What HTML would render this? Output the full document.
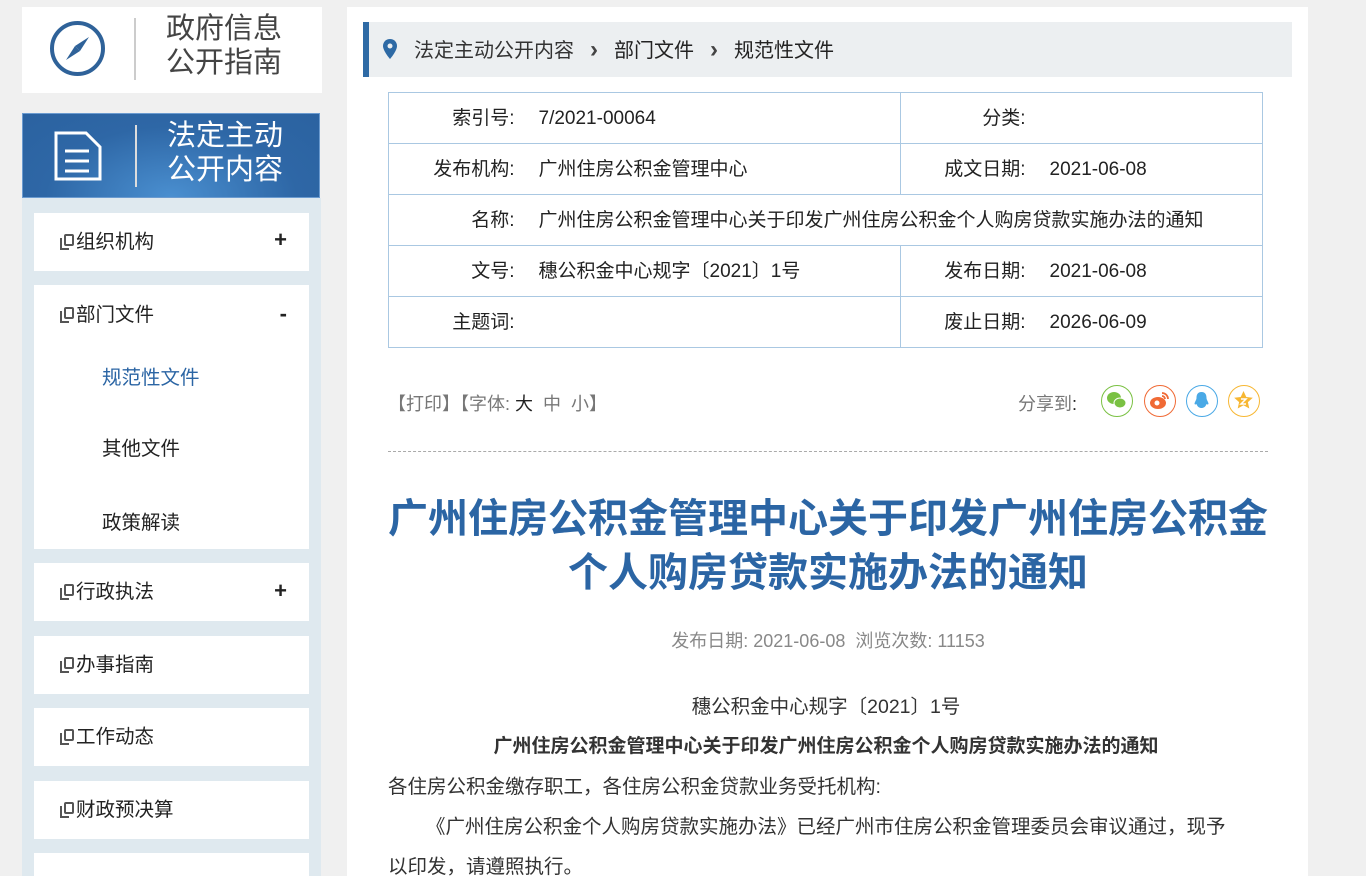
<!DOCTYPE html>
<html><head><meta charset="utf-8"><style>
*{margin:0;padding:0;box-sizing:border-box}
html,body{width:1366px;height:876px;overflow:hidden}
body{background:#f0f0f0;font-family:"Liberation Sans","Noto Sans CJK SC",sans-serif;position:relative;color:#333}
.abs{position:absolute}
.top{left:22px;top:7px;width:300px;height:86px;background:#fff}
.blue{left:22px;top:113px;width:298px;height:85px;background:radial-gradient(ellipse at 50% 100%,#4a8fd0 0%,#2e67a6 60%,#2b62a0 100%);border:1px solid #6b9bd0}
.vsep{position:absolute;left:112px;top:18px;width:2px;height:62px}
.bt{position:absolute;left:144px;font-size:29px;line-height:34px;}
.side{left:22px;top:198px;width:299px;height:700px;background:#dfe9ef}
.item{position:absolute;left:12px;width:275px;background:#fff;font-size:19.5px;color:#222}
.item .l{position:absolute;left:26px;line-height:28px}
.item .p{position:absolute;right:22px;font-size:22px;font-weight:bold}
.ic{display:inline-block;width:10px;height:12px;border:2px solid #555;border-radius:2px;position:relative;margin-right:6px;vertical-align:2px;left:4px}
.ic:before{content:"";position:absolute;left:-6px;top:2px;width:7px;height:10px;border-left:2px solid #555;border-bottom:2px solid #555}
.main{left:347px;top:7px;width:961px;height:880px;background:#fff}
.bc{left:363px;top:22px;width:929px;height:55px;background:#eceff1;border-left:6px solid #2e6aa5;font-size:20px;line-height:55px;color:#333}
.chev{display:inline-block;margin:0 16px;font-size:24px;font-weight:bold;color:#444}
table{position:absolute;left:388px;top:92px;width:875px;border-collapse:collapse;font-size:19px;color:#222}
td{border-top:1px solid #aac8e2;border-bottom:1px solid #aac8e2;height:51px;padding:2px 0 0;line-height:26px;vertical-align:middle}
td span{display:inline-block;line-height:26px;height:26px}
td.k{text-align:right;padding-right:24px}
td.first{border-left:1px solid #aac8e2}
td.last{border-right:1px solid #aac8e2}
td.mid{border-right:1px solid #aac8e2}
.sh{width:32px;height:32px;border-radius:50%;border:1.5px solid;top:385px;background:#fff}
p{position:absolute;font-size:19.5px;color:#333}
</style></head><body>
<div class="abs top">
 <svg class="abs" style="left:27px;top:13px" width="57" height="57" viewBox="0 0 57 57"><circle cx="28.5" cy="28.5" r="25.5" fill="none" stroke="#2f6299" stroke-width="4"/><path d="M40 17 L31 31 L26 26 Z" fill="#2f6299"/><path d="M17 40 L26 26 L31 31 Z" fill="#2f6299"/></svg>
 <div class="vsep" style="background:#ccc;top:11px"></div>
 <div class="bt" style="top:5px;color:#444">政府信息<br>公开指南</div>
</div>
<div class="abs blue">
 <svg class="abs" style="left:30px;top:16px" width="52" height="52" viewBox="0 0 52 52"><path d="M3 3 H33 L47 17 V49 H3 Z" fill="none" stroke="#fff" stroke-width="3"/><path d="M12 21H36M12 31H36M12 41H36" stroke="#fff" stroke-width="3"/></svg>
 <div class="vsep" style="background:#ddd;top:11px"></div>
 <div class="bt" style="top:5px;color:#fff">法定主动<br>公开内容</div>
</div>
<div class="abs side">
 <div class="item" style="top:15px;height:58px"><span class="l" style="top:15px"><span class="ic"></span>组织机构</span><span class="p" style="top:14px">+</span></div>
 <div class="item" style="top:87px;height:264px"><span class="l" style="top:16px"><span class="ic"></span>部门文件</span><span class="p" style="top:16px">-</span>
  <span class="abs" style="left:68px;top:76px;color:#2b65a4">规范性文件</span>
  <span class="abs" style="left:68px;top:147px">其他文件</span>
  <span class="abs" style="left:68px;top:221px">政策解读</span></div>
 <div class="item" style="top:365px;height:58px"><span class="l" style="top:15px"><span class="ic"></span>行政执法</span><span class="p" style="top:15px">+</span></div>
 <div class="item" style="top:438px;height:58px"><span class="l" style="top:15px"><span class="ic"></span>办事指南</span></div>
 <div class="item" style="top:510px;height:58px"><span class="l" style="top:15px"><span class="ic"></span>工作动态</span></div>
 <div class="item" style="top:583px;height:58px"><span class="l" style="top:15px"><span class="ic"></span>财政预决算</span></div>
 <div class="item" style="top:655px;height:58px"></div>
</div>
<div class="abs main"></div>
<div class="abs bc"><svg style="position:absolute;left:14px;top:17px" width="14" height="20" viewBox="0 0 14 20"><path d="M7 0C3 0 0 3 0 7c0 5 7 13 7 13s7-8 7-13c0-4-3-7-7-7z" fill="#2e6aa5"/><circle cx="7" cy="7" r="2.5" fill="#eceff1"/></svg><span style="margin-left:45px">法定主动公开内容</span><span class="chev">›</span><span style="color:#222">部门文件</span><span class="chev">›</span><span style="color:#222">规范性文件</span></div>
<table>
<tr><td class="k first" style="width:150px"><span>索引号:</span></td><td style="width:362px" class="mid"><span>7/2021-00064</span></td><td class="k" style="width:149px"><span>分类:</span></td><td class="last"></td></tr>
<tr><td class="k first"><span>发布机构:</span></td><td class="mid"><span>广州住房公积金管理中心</span></td><td class="k"><span>成文日期:</span></td><td class="last"><span>2021-06-08</span></td></tr>
<tr><td class="k first"><span>名称:</span></td><td colspan="3" class="last"><span>广州住房公积金管理中心关于印发广州住房公积金个人购房贷款实施办法的通知</span></td></tr>
<tr><td class="k first"><span>文号:</span></td><td class="mid"><span>穗公积金中心规字〔2021〕1号</span></td><td class="k"><span>发布日期:</span></td><td class="last"><span>2021-06-08</span></td></tr>
<tr><td class="k first"><span>主题词:</span></td><td class="mid"></td><td class="k"><span>废止日期:</span></td><td class="last"><span>2026-06-09</span></td></tr>
</table>
<p style="left:388px;top:390px;color:#777;font-size:18px">【打印】【字体: <span style="color:#222">大</span> &nbsp;中 &nbsp;小】</p>
<p style="left:1018px;top:390px;color:#777;font-size:18px">分享到<span style="color:#222">:</span></p>
<div class="abs sh" style="left:1101px;border-color:#7ac143"><svg width="29" height="29" viewBox="0 0 29 29"><ellipse cx="12" cy="12" rx="7" ry="6" fill="#7ac143"/><ellipse cx="18" cy="17" rx="6" ry="5" fill="#7ac143" stroke="#fff" stroke-width="1"/></svg></div>
<div class="abs sh" style="left:1144px;border-color:#f06a35"><svg width="29" height="29" viewBox="0 0 29 29"><ellipse cx="13" cy="17" rx="8" ry="6" fill="#f06a35"/><circle cx="12" cy="17" r="2.5" fill="#fff"/><path d="M17 7a6 6 0 0 1 6 6M17 10a3 3 0 0 1 3 3" stroke="#f06a35" stroke-width="1.8" fill="none"/></svg></div>
<div class="abs sh" style="left:1186px;border-color:#4aa9e6"><svg width="29" height="29" viewBox="0 0 29 29"><path d="M14.5 6c-4 0-5 3-5 6 0 2-2 4-2 6 1 1 2 0 2 0 1 3 3 4 5 4s4-1 5-4c0 0 1 1 2 0 0-2-2-4-2-6 0-3-1-6-5-6z" fill="#4aa9e6"/></svg></div>
<div class="abs sh" style="left:1228px;border-color:#f7b733"><svg width="29" height="29" viewBox="0 0 29 29"><path d="M14.5 5l2.8 6 6.5.7-4.9 4.4 1.4 6.4-5.8-3.3-5.8 3.3 1.4-6.4-4.9-4.4 6.5-.7z" fill="#f7b733"/><path d="M12 13h5l-5 5h5" stroke="#fff" stroke-width="1.5" fill="none"/></svg></div>
<div class="abs" style="left:388px;top:451px;width:880px;border-top:1px dashed #aaa"></div>
<div class="abs" style="left:368px;top:492px;width:920px;text-align:center;font-size:40px;font-weight:bold;color:#2b65a4;line-height:54px">广州住房公积金管理中心关于印发广州住房公积金<br>个人购房贷款实施办法的通知</div>
<p style="left:0;width:1656px;text-align:center;top:627px;color:#888;font-size:18px">发布日期: 2021-06-08 &nbsp;浏览次数: 11153</p>
<p style="left:0;width:1652px;text-align:center;top:690px">穗公积金中心规字〔2021〕1号</p>
<p style="left:0;width:1652px;text-align:center;top:731px;font-weight:bold;font-size:19px">广州住房公积金管理中心关于印发广州住房公积金个人购房贷款实施办法的通知</p>
<p style="left:388px;top:770px">各住房公积金缴存职工，各住房公积金贷款业务受托机构:</p>
<p style="left:388px;top:807px;width:850px;line-height:40px;text-indent:38px">《广州住房公积金个人购房贷款实施办法》已经广州市住房公积金管理委员会审议通过，现予以印发，请遵照执行。</p>
</body></html>
